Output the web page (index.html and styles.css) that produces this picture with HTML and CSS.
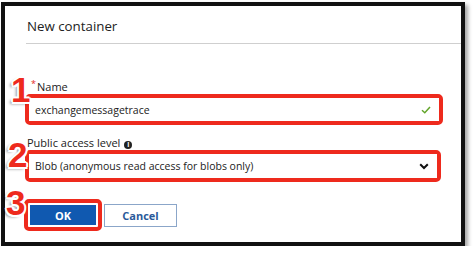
FILE: index.html
```html
<!DOCTYPE html>
<html lang="en">

<head>
  <meta charset="UTF-8">
  <meta name="viewport" content="width=device-width, initial-scale=1.0">
  <title>New container</title>
  <link rel="stylesheet" href="styles.css">
</head>

<body>
  <section class="dialog">
    <header class="dialog-header">New container</header>
    <form class="form">
      <div class="field field-name">
        <span class="step">1</span>
        <label class="field-label"><span class="required">*</span>Name</label>
        <div class="mark mark-input">
          <div class="input">
            <span>exchangemessagetrace</span>
            <svg class="check" width="10" height="8" viewBox="0 0 10 8">
              <path d="M1 4.2 L3.8 6.8 L9 1" fill="none" stroke="#62a52a" stroke-width="1.5" />
            </svg>
          </div>
        </div>
      </div>
      <div class="field field-access">
        <span class="step">2</span>
        <label class="field-label">Public access level <span class="info">i</span></label>
        <div class="mark mark-select">
          <div class="input">
            <span>Blob (anonymous read access for blobs only)</span>
            <svg class="chevron" width="10" height="7" viewBox="0 0 10 7">
              <path d="M1.2 1.2 L5 5 L8.8 1.2" fill="none" stroke="#111" stroke-width="2" />
            </svg>
          </div>
        </div>
      </div>
      <div class="actions">
        <span class="step">3</span>
        <div class="mark mark-ok">
          <button type="button" class="btn btn-primary">OK</button>
        </div>
        <button type="button" class="btn btn-default">Cancel</button>
      </div>
    </form>
  </section>
</body>

</html>
```

FILE: styles.css
```css
html {
  box-sizing: border-box;
  font-family: "Open Sans", sans-serif;
  font-size: 11px;
}

*,
*::before,
*::after {
  box-sizing: inherit;
}

body {
  margin: 0;
  background-color: #fff;
  color: #222;
}

.dialog {
  margin: 2px 0 0 1px;
  width: 464px;
  height: 244px;
  border: 4px solid #111;
  background-color: #fff;
  box-shadow: 3px 3px 4px rgba(0, 0, 0, .35);
}

.dialog-header {
  margin-left: 21px;
  padding: 10px 0 7px 1px;
  border-bottom: 1px solid #cfcfcf;
  font-size: 13.3px;
  line-height: 20px;
  color: #222;
}

.form {
  padding-left: 20px;
}

.field {
  position: relative;
}

.field-name {
  margin-top: 36px;
}

.field-access {
  margin-top: 10px;
}

.field-label {
  position: relative;
  display: block;
  line-height: 14px;
  padding-left: 12px;
}

.field-access .field-label {
  padding-left: 2px;
  line-height: 15px;
}

.required {
  position: absolute;
  left: 6px;
  top: -3px;
  font-size: 9px;
  color: #e4281c;
}

.info {
  display: inline-block;
  width: 8px;
  height: 8px;
  margin-left: 1px;
  border-radius: 50%;
  background-color: #222;
  color: #fff;
  font-size: 7px;
  font-weight: bold;
  line-height: 8px;
  text-align: center;
  vertical-align: 0;
}

.mark {
  border: 4px solid #ee2a1d;
  border-radius: 5px;
}

.mark-input {
  width: 418px;
  height: 31px;
}

.mark-select {
  width: 416px;
  height: 32px;
}

.input {
  display: flex;
  justify-content: space-between;
  align-items: center;
  height: 100%;
  padding: 0 8px 0 6px;
  background-color: #fff;
  font-size: 10.5px;
}

.step {
  position: absolute;
  left: -14px;
  top: -7px;
  font-family: "Liberation Sans", Arial, sans-serif;
  font-size: 35px;
  font-weight: bold;
  line-height: 34px;
  color: #ee2a1d;
  text-shadow:
    2px 0 #fff, -2px 0 #fff, 0 2px #fff, 0 -2px #fff,
    1.5px 1.5px #fff, -1.5px 1.5px #fff, 1.5px -1.5px #fff, -1.5px -1.5px #fff,
    -3px 2px 3px rgba(0, 0, 0, .45);
}

.field-access .step {
  left: -17px;
  top: 3px;
}

.actions {
  position: relative;
  display: flex;
  align-items: center;
  gap: 2px;
  margin: 17px 0 0 -1px;
}

.actions .step {
  left: -18px;
  top: -13px;
}

.mark-ok {
  padding: 2px;
}

.btn {
  font-family: "Open Sans", sans-serif;
  font-size: 11px;
  font-weight: bold;
  cursor: pointer;
}

.btn-primary {
  display: block;
  width: 66px;
  height: 20px;
  border: 0;
  background-color: #1059b0;
  color: #fff;
}

.btn-default {
  width: 73px;
  height: 23px;
  border: 1px solid #8ba6c9;
  background-color: #fff;
  color: #2a5a9a;
}
```
